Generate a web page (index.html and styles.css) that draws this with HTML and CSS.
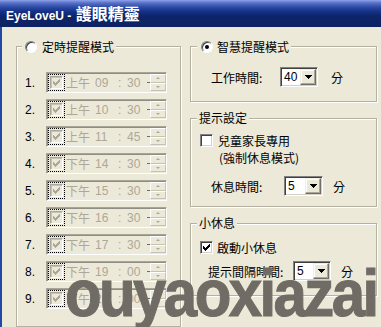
FILE: index.html
```html
<!DOCTYPE html>
<html lang="zh-Hant">
<head>
<meta charset="utf-8">
<title>EyeLoveU - 護眼精靈</title>
<link rel="stylesheet" href="styles.css">
</head>
<body>
<div class="window">
  <div class="titlebar"><span class="t-latin">EyeLoveU - </span><span class="t-cjk">護眼精靈</span></div>
  <div class="client">
    <fieldset class="group left-group">
      <legend><span class="legend-in"><span class="radio"></span><span class="ltext">定時提醒模式</span></span></legend>
      <div class="rows">
        <div class="row"><span class="num">1.</span><div class="dtp"><span class="focus"><span class="chk dis"><svg width="7" height="7" viewBox="0 0 7 7"><path d="M0 2h1v1h1v1h1v-1h1v-1h1v-1h1v-1h1v3h-1v1h-1v1h-1v1h-1v1h-1v-1h-1v-1h-1z" fill="#aca899"/></svg></span></span><span class="ap">上午</span><span class="hh">09</span><span class="colon">:</span><span class="mm">30</span><span class="spin"><span class="sb up"></span><span class="sb dn"></span></span></div></div>
        <div class="row"><span class="num">2.</span><div class="dtp"><span class="focus"><span class="chk dis"><svg width="7" height="7" viewBox="0 0 7 7"><path d="M0 2h1v1h1v1h1v-1h1v-1h1v-1h1v-1h1v3h-1v1h-1v1h-1v1h-1v1h-1v-1h-1v-1h-1z" fill="#aca899"/></svg></span></span><span class="ap">上午</span><span class="hh">10</span><span class="colon">:</span><span class="mm">30</span><span class="spin"><span class="sb up"></span><span class="sb dn"></span></span></div></div>
        <div class="row"><span class="num">3.</span><div class="dtp"><span class="focus"><span class="chk dis"><svg width="7" height="7" viewBox="0 0 7 7"><path d="M0 2h1v1h1v1h1v-1h1v-1h1v-1h1v-1h1v3h-1v1h-1v1h-1v1h-1v1h-1v-1h-1v-1h-1z" fill="#aca899"/></svg></span></span><span class="ap">上午</span><span class="hh">11</span><span class="colon">:</span><span class="mm">45</span><span class="spin"><span class="sb up"></span><span class="sb dn"></span></span></div></div>
        <div class="row"><span class="num">4.</span><div class="dtp"><span class="focus"><span class="chk dis"><svg width="7" height="7" viewBox="0 0 7 7"><path d="M0 2h1v1h1v1h1v-1h1v-1h1v-1h1v-1h1v3h-1v1h-1v1h-1v1h-1v1h-1v-1h-1v-1h-1z" fill="#aca899"/></svg></span></span><span class="ap">下午</span><span class="hh">14</span><span class="colon">:</span><span class="mm">30</span><span class="spin"><span class="sb up"></span><span class="sb dn"></span></span></div></div>
        <div class="row"><span class="num">5.</span><div class="dtp"><span class="focus"><span class="chk dis"><svg width="7" height="7" viewBox="0 0 7 7"><path d="M0 2h1v1h1v1h1v-1h1v-1h1v-1h1v-1h1v3h-1v1h-1v1h-1v1h-1v1h-1v-1h-1v-1h-1z" fill="#aca899"/></svg></span></span><span class="ap">下午</span><span class="hh">15</span><span class="colon">:</span><span class="mm">30</span><span class="spin"><span class="sb up"></span><span class="sb dn"></span></span></div></div>
        <div class="row"><span class="num">6.</span><div class="dtp"><span class="focus"><span class="chk dis"><svg width="7" height="7" viewBox="0 0 7 7"><path d="M0 2h1v1h1v1h1v-1h1v-1h1v-1h1v-1h1v3h-1v1h-1v1h-1v1h-1v1h-1v-1h-1v-1h-1z" fill="#aca899"/></svg></span></span><span class="ap">下午</span><span class="hh">16</span><span class="colon">:</span><span class="mm">30</span><span class="spin"><span class="sb up"></span><span class="sb dn"></span></span></div></div>
        <div class="row"><span class="num">7.</span><div class="dtp"><span class="focus"><span class="chk dis"><svg width="7" height="7" viewBox="0 0 7 7"><path d="M0 2h1v1h1v1h1v-1h1v-1h1v-1h1v-1h1v3h-1v1h-1v1h-1v1h-1v1h-1v-1h-1v-1h-1z" fill="#aca899"/></svg></span></span><span class="ap">下午</span><span class="hh">17</span><span class="colon">:</span><span class="mm">30</span><span class="spin"><span class="sb up"></span><span class="sb dn"></span></span></div></div>
        <div class="row"><span class="num">8.</span><div class="dtp"><span class="focus"><span class="chk dis"><svg width="7" height="7" viewBox="0 0 7 7"><path d="M0 2h1v1h1v1h1v-1h1v-1h1v-1h1v-1h1v3h-1v1h-1v1h-1v1h-1v1h-1v-1h-1v-1h-1z" fill="#aca899"/></svg></span></span><span class="ap">下午</span><span class="hh">19</span><span class="colon">:</span><span class="mm">00</span><span class="spin"><span class="sb up"></span><span class="sb dn"></span></span></div></div>
        <div class="row"><span class="num">9.</span><div class="dtp"><span class="focus"><span class="chk dis"><svg width="7" height="7" viewBox="0 0 7 7"><path d="M0 2h1v1h1v1h1v-1h1v-1h1v-1h1v-1h1v3h-1v1h-1v1h-1v1h-1v1h-1v-1h-1v-1h-1z" fill="#aca899"/></svg></span></span><span class="ap">下午</span><span class="hh">20</span><span class="colon">:</span><span class="mm">00</span><span class="spin"><span class="sb up"></span><span class="sb dn"></span></span></div></div>
      </div>
    </fieldset>
    <div class="right">
      <fieldset class="group g1">
        <legend><span class="legend-in"><span class="radio on"></span><span class="ltext">智慧提醒模式</span></span></legend>
        <div class="gbody">
          <div class="field"><span class="lbl">工作時間:</span><span class="combo"><span class="cval">40</span><span class="cbtn"><svg width="7" height="4" viewBox="0 0 7 4"><path d="M0 0h7v1h-1v1h-1v1h-1v1h-1v-1h-1v-1h-1v-1h-1z" fill="#000"/></svg></span></span><span class="unit">分</span></div>
        </div>
      </fieldset>
      <fieldset class="group g2">
        <legend><span class="ltext">提示設定</span></legend>
        <div class="gbody">
          <div class="check-row"><span class="chk"></span><span class="clabel">兒童家長專用<br><span class="sub">(強制休息模式)</span></span></div>
          <div class="field"><span class="lbl">休息時間:</span><span class="combo"><span class="cval">5</span><span class="cbtn"><svg width="7" height="4" viewBox="0 0 7 4"><path d="M0 0h7v1h-1v1h-1v1h-1v1h-1v-1h-1v-1h-1v-1h-1z" fill="#000"/></svg></span></span><span class="unit">分</span></div>
        </div>
      </fieldset>
      <fieldset class="group g3">
        <legend><span class="ltext">小休息</span></legend>
        <div class="gbody">
          <div class="check-row"><span class="chk"><svg width="7" height="7" viewBox="0 0 7 7"><path d="M0 2h1v1h1v1h1v-1h1v-1h1v-1h1v-1h1v3h-1v1h-1v1h-1v1h-1v1h-1v-1h-1v-1h-1z" fill="#000"/></svg></span><span class="clabel">啟動小休息</span></div>
          <div class="field"><span class="lbl">提示間隔時間:</span><span class="combo"><span class="cval">5</span><span class="cbtn"><svg width="7" height="4" viewBox="0 0 7 4"><path d="M0 0h7v1h-1v1h-1v1h-1v1h-1v-1h-1v-1h-1v-1h-1z" fill="#000"/></svg></span></span><span class="unit">分</span></div>
        </div>
      </fieldset>
    </div>
  </div>
  <div class="watermark">ouyaoxiazai</div>
</div>
</body>
</html>
```

FILE: styles.css
```css
* { box-sizing: border-box; }
html, body { margin: 0; padding: 0; }
body {
  width: 381px;
  height: 327px;
  overflow: hidden;
  background: #ece9d8;
  font-family: "Liberation Sans", "Noto Sans CJK TC", sans-serif;
  font-size: 12px;
  color: #000;
}
.window { position: relative; height: 327px; overflow: hidden; }

.titlebar {
  height: 27px;
  padding-left: 6px;
  background: linear-gradient(to bottom, #8ea3e8 0px, #5670c8 3px, #2e4ca6 7px, #17328a 11px, #0e2569 16px, #0c2262 27px);
  color: #fff;
  font-weight: bold;
  line-height: 27px;
  white-space: nowrap;
}
.t-latin { font-size: 12px; }
.t-cjk { font-family: "Noto Sans CJK TC", sans-serif; font-size: 16px; margin-left: 1px; }

.client {
  display: flex;
  gap: 9px;
  height: 300px;
  padding: 13px 0 0 14px;
  border-left: 2px solid #2347a6;
}

.group {
  margin: 0;
  padding: 0;
  min-width: 0;
  border: 1px solid #b4b1a3;
  box-shadow: inset 1px 1px 0 #fff, 1px 1px 0 #fff;
}
.group legend {
  margin-left: 5px;
  padding: 0 2px 0 3px;
  line-height: 14px;
  background: #ece9d8;
  font-family: "Noto Sans CJK TC", sans-serif;
}
.legend-in { display: flex; align-items: center; height: 13px; }
.legend-in .ltext { margin-left: 5px; line-height: 13px; }

.radio {
  flex: none;
  position: relative;
  width: 12px;
  height: 12px;
  border-radius: 50%;
  background: #fff;
  border: 1px solid;
  border-color: #808080 #fff #fff #808080;
  box-shadow: inset 1px 1px 0 #404040;
}
.radio.on::after {
  content: "";
  position: absolute;
  left: 3px;
  top: 3px;
  width: 4px;
  height: 4px;
  border-radius: 50%;
  background: #000;
}

.left-group { width: 165px; }
.rows {
  display: flex;
  flex-direction: column;
  gap: 6px;
  padding: 19px 0 12px 8px;
}
.row { display: flex; align-items: center; height: 21px; }
.num { width: 21px; }
.dtp {
  display: flex;
  align-items: center;
  width: 121px;
  height: 21px;
  padding-left: 1px;
  border: 1px solid;
  border-color: #a7a498 #fff #fff #a7a498;
  box-shadow: inset 1px 1px 0 #8f8d84;
  color: #aca899;
}
.focus {
  display: flex;
  align-items: center;
  justify-content: center;
  width: 17px;
  height: 17px;
  border: 1px dotted #000;
}
.chk {
  flex: none;
  display: flex;
  align-items: center;
  justify-content: center;
  width: 13px;
  height: 13px;
  background: #fff;
  border: 1px solid;
  border-color: #808080 #fff #fff #808080;
  box-shadow: inset 1px 1px 0 #404040, inset -1px -1px 0 #d4d0c8;
}
.chk svg { display: block; }
.chk.dis { background: #ece9d8; border-color: #aca899 #fff #fff #aca899; box-shadow: inset 1px 1px 0 #c5c2b2; }
.ap { margin-left: 1px; width: 29px; font-family: "Noto Sans CJK TC", sans-serif; }
.hh { width: 23px; }
.colon { width: 9px; }
.spin {
  position: relative;
  display: flex;
  flex-direction: column;
  margin-left: auto;
  width: 16px;
  height: 17px;
}
.spin::before {
  content: "";
  position: absolute;
  left: -3px;
  right: 0;
  top: 8px;
  height: 1px;
  background: #716f64;
}
.sb {
  position: relative;
  flex: 1;
  border: 1px solid;
  border-color: #fff #c5c2b2 #c5c2b2 #fff;
  background: #ece9d8;
}
.sb::after {
  content: "";
  position: absolute;
  left: 50%;
  top: 50%;
  margin-left: -2px;
  margin-top: -1px;
  border-left: 2px solid transparent;
  border-right: 2px solid transparent;
}
.sb.up::after { border-bottom: 2px solid #aca899; }
.sb.dn::after { border-top: 2px solid #aca899; }

.right {
  display: flex;
  flex-direction: column;
  gap: 9px;
  width: 187px;
}
.g1 legend { margin-left: 6px; padding-left: 4px; }
.g1 .legend-in .ltext { margin-left: 4px; }
.g2 legend, .g3 legend { margin-left: 6px; padding-left: 2px; }

.field { display: flex; align-items: center; height: 20px; font-family: "Noto Sans CJK TC", sans-serif; }
.field .lbl { flex: none; }
.combo {
  flex: none;
  display: flex;
  align-items: center;
  height: 20px;
  padding: 1px;
  background: #fff;
  border: 1px solid;
  border-color: #808080 #fff #fff #808080;
  box-shadow: inset 1px 1px 0 #404040, inset -1px -1px 0 #d4d0c8;
  font-family: "Liberation Sans", sans-serif;
}
.cval { flex: 1; padding-left: 2px; }
.cbtn {
  display: flex;
  align-items: center;
  justify-content: center;
  width: 16px;
  height: 16px;
  background: #ece9d8;
  border: 1px solid;
  border-color: #f1efe2 #716f64 #716f64 #f1efe2;
  box-shadow: inset -1px -1px 0 #aca899, inset 1px 1px 0 #fff;
}
.cbtn svg { display: block; }

.check-row { display: flex; align-items: flex-start; font-family: "Noto Sans CJK TC", sans-serif; line-height: 17px; }
.check-row .chk { margin-top: 2px; }
.clabel { margin-left: 5px; }
.clabel .sub { padding-left: 1px; }

.g1 .gbody { padding: 14px 0 14px 20px; }
.g1 .lbl { width: 69px; }
.g1 .combo { width: 38px; }
.g1 .unit { margin-left: 13px; }

.g2 .gbody { padding: 7px 0 10px 9px; }
.g2 .field { margin-top: 10px; padding-left: 11px; }
.g2 .lbl { width: 73px; }
.g2 .combo { width: 39px; }
.g2 .unit { margin-left: 10px; }

.g3 .gbody { padding: 9px 0 14px 9px; }
.g3 .clabel { margin-left: 4px; }
.g3 .field { margin-top: 5px; padding-left: 8px; }
.g3 .lbl { width: 85px; }
.g3 .combo { width: 38px; }
.g3 .unit { margin-left: 10px; }

.watermark {
  position: absolute;
  left: 65px;
  top: 266px;
  font: bold 60px/60px "Liberation Sans", sans-serif;
  letter-spacing: -2.6px;
  color: #706c65;
  -webkit-text-stroke: 1px #706c65;
  white-space: nowrap;
  pointer-events: none;
  transform: scaleY(1.1);
  transform-origin: 0 51px;
}
```
